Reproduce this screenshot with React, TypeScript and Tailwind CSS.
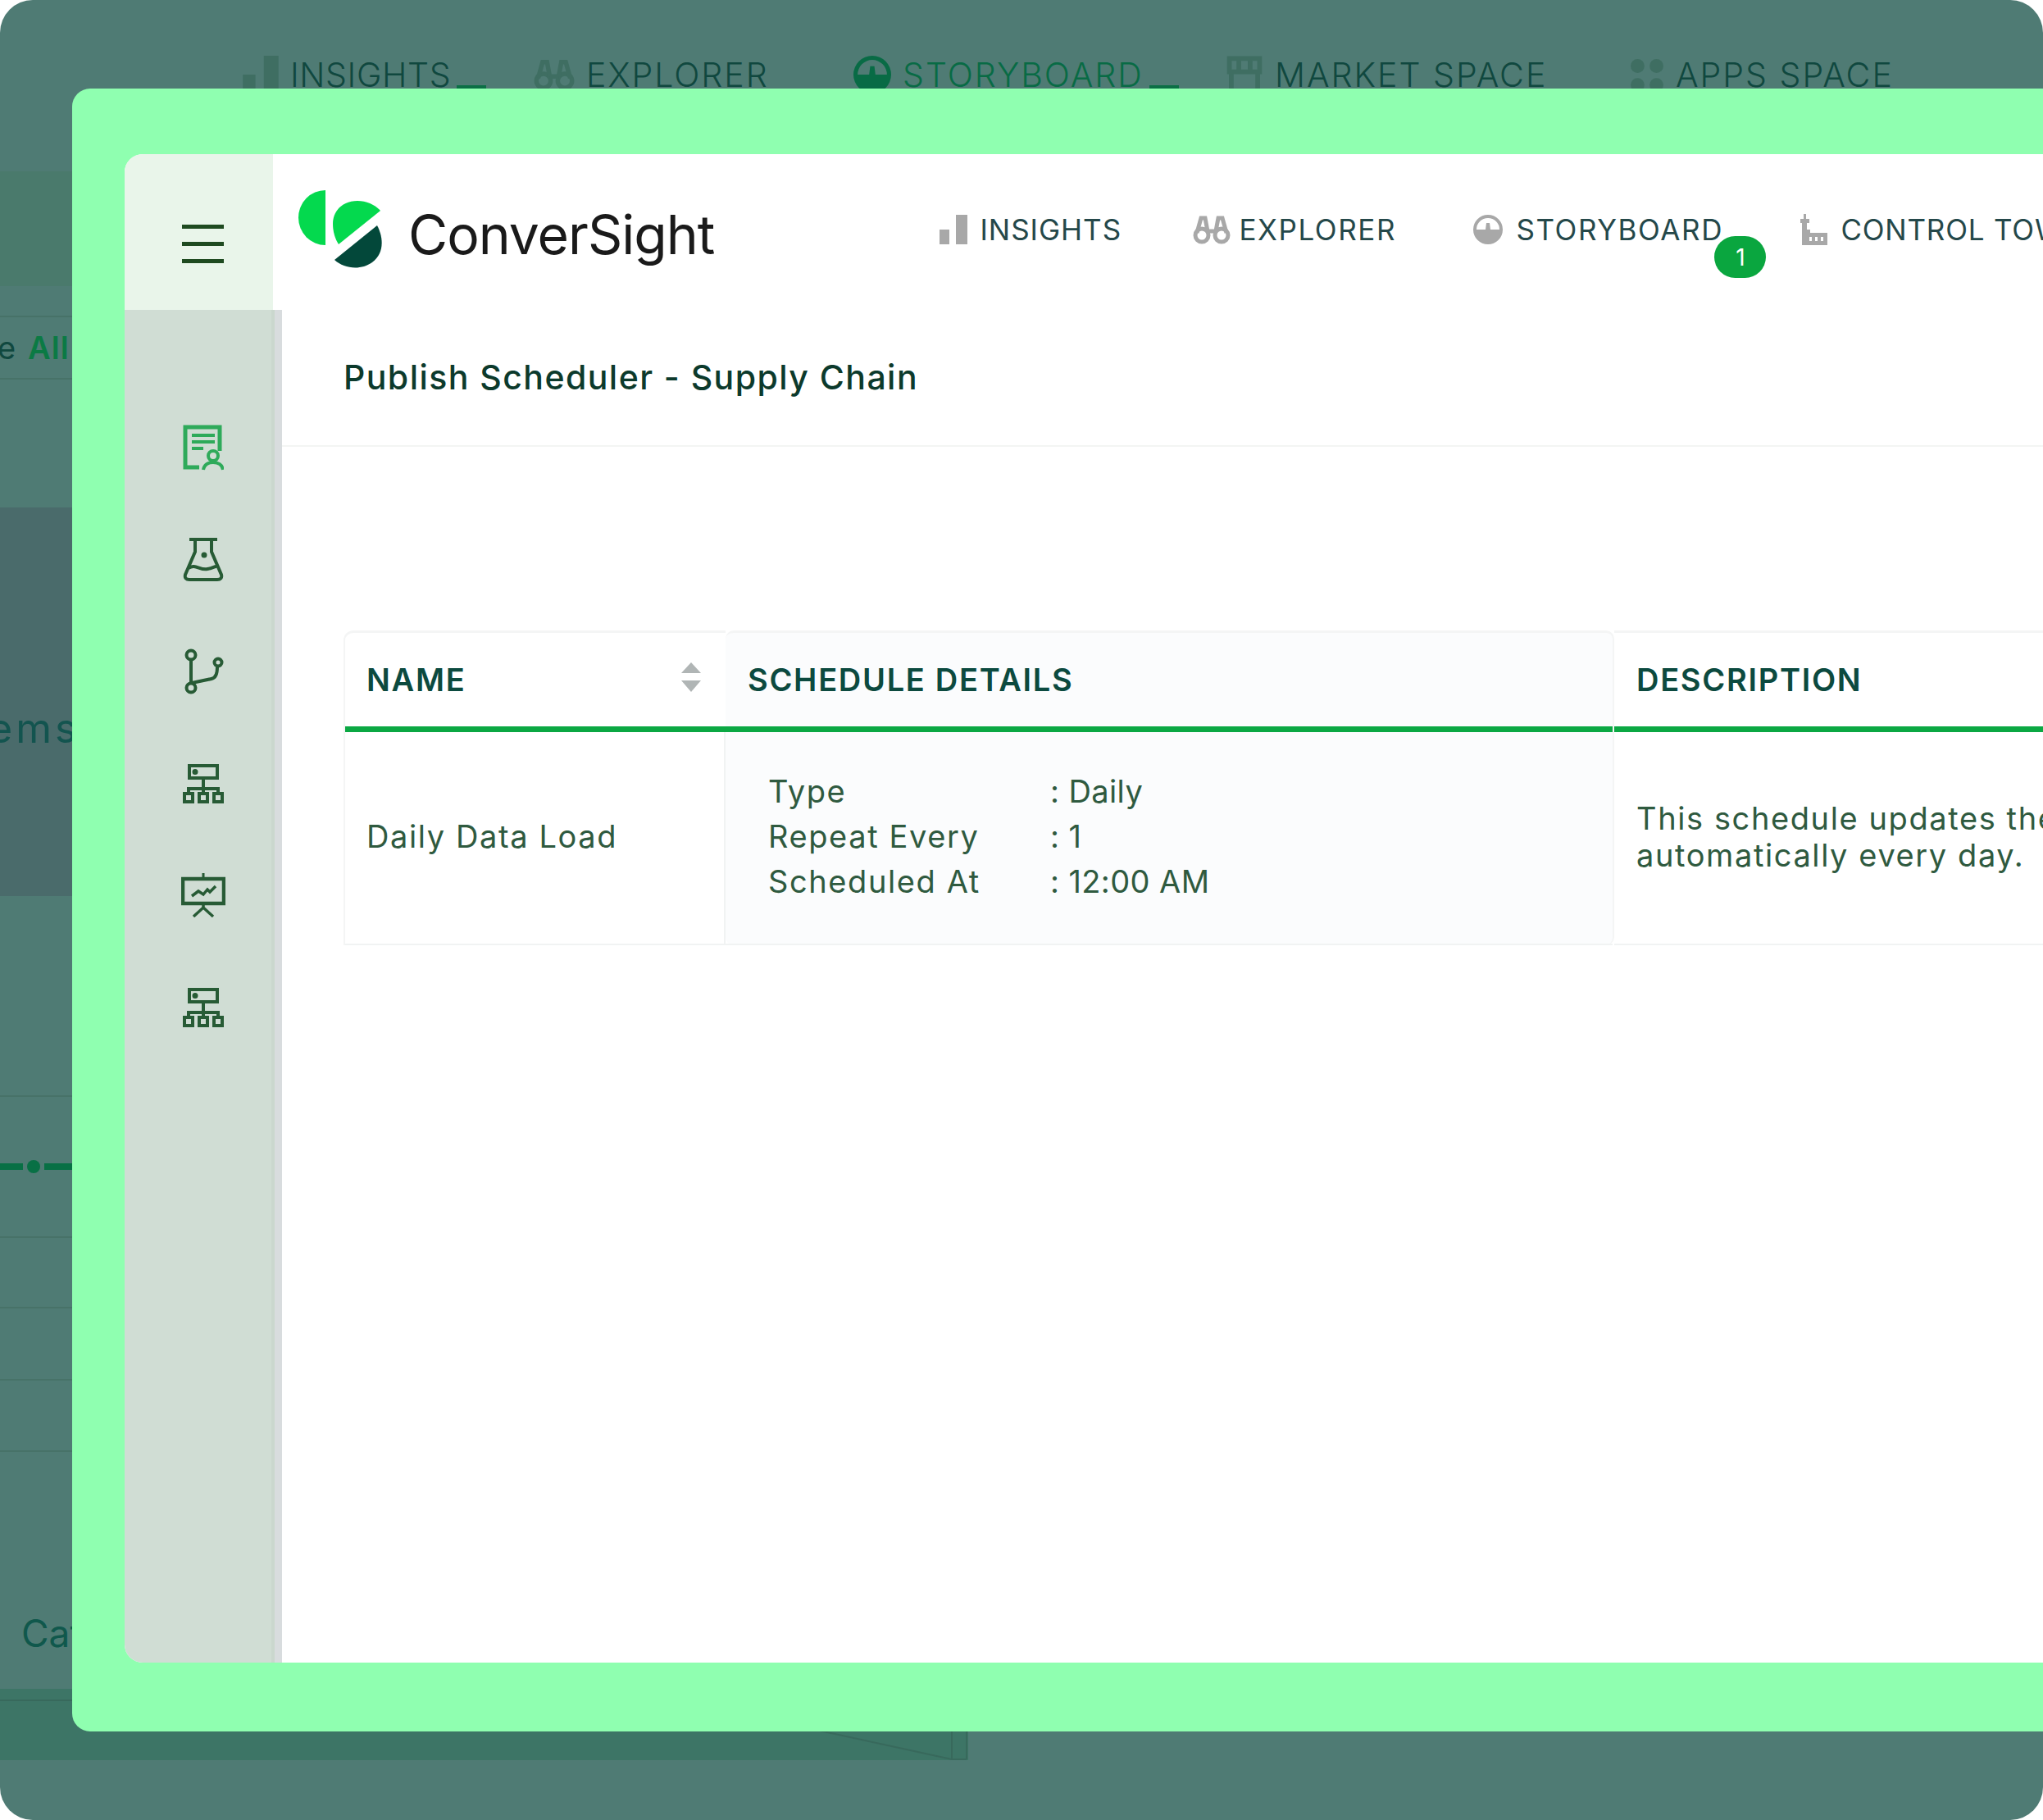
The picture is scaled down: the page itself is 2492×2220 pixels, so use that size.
import type { ReactNode } from 'react'

const BarsIcon = ({ className }: { className: string }) => (
  <svg viewBox="0 0 34 36" className={className} fill="currentColor">
    <rect x="0" y="18" width="12" height="18" />
    <rect x="20" y="0" width="14" height="36" />
  </svg>
)

const BinocularsIcon = ({ className }: { className: string }) => (
  <svg viewBox="0 0 46 36" className={className} fill="none" stroke="currentColor" strokeWidth="5">
    <circle cx="11" cy="25" r="8" />
    <circle cx="35" cy="25" r="8" />
    <path d="M5 22 10 4h5l3 16M41 22 36 4h-5l-3 16M18 20h10" />
  </svg>
)

const GaugeIcon = ({ className }: { className: string }) => (
  <svg viewBox="0 0 36 36" className={className} fill="currentColor">
    <path fillRule="evenodd" d="M18 0a18 18 0 1 1 0 36 18 18 0 0 1 0-36Zm0 4A14 14 0 0 0 4 18h11l1-8h4l1 8h11A14 14 0 0 0 18 4Z" />
  </svg>
)

const TowerIcon = ({ className }: { className: string }) => (
  <svg viewBox="0 0 34 38" className={className} fill="currentColor">
    <path fillRule="evenodd" d="M5 0h3v6h4v5H9v8h4v4h21v15H3V11H1V6h4V0Zm7 28v5h3v-5h-3Zm7 0v5h3v-5h-3Zm7 0v5h3v-5h-3Z" />
  </svg>
)

const StoreIcon = ({ className }: { className: string }) => (
  <svg viewBox="0 0 40 40" className={className} fill="none" stroke="currentColor" strokeWidth="5">
    <path d="M4 3h32v14H4zM14 3v14M26 3v14M6 17v20h28V17" />
  </svg>
)

const AppsIcon = ({ className }: { className: string }) => (
  <svg viewBox="0 0 40 40" className={className} fill="currentColor">
    <circle cx="9" cy="10" r="8" />
    <circle cx="31" cy="10" r="8" />
    <circle cx="9" cy="32" r="8" />
    <circle cx="31" cy="32" r="8" />
  </svg>
)

const ReportIcon = () => (
  <svg viewBox="0 0 50 56" className="h-[56px] w-[50px]" fill="none" stroke="#2eaa5a" strokeWidth="4">
    <path d="M20 52H3V3h42v29" strokeWidth="5" />
    <path d="M11 13h28M11 21h28M11 29h14" />
    <circle cx="37" cy="38" r="6" />
    <path d="M25 55c1-6 6-9 12-9s11 3 12 9" />
  </svg>
)

const FlaskIcon = () => (
  <svg viewBox="0 0 50 56" className="h-[56px] w-[50px]" fill="none" stroke="#275b35" strokeWidth="4">
    <path d="M8 3h34M15 3v15L3 46c-1 4 1 6 5 6h34c4 0 6-2 5-6L35 18V3" />
    <path d="M7 38c8-6 14 3 23 1 6-1 8-3 11-3" />
    <circle cx="26" cy="22" r="1.5" fill="#275b35" />
  </svg>
)

const BranchIcon = () => (
  <svg viewBox="0 0 50 56" className="h-[56px] w-[50px]" fill="none" stroke="#275b35" strokeWidth="4">
    <circle cx="10" cy="8" r="5.5" />
    <circle cx="10" cy="48" r="5.5" />
    <circle cx="43" cy="17" r="4.5" />
    <path d="M10 14v28M11 42l24-5c5-1 7-5 7-14" />
  </svg>
)

const NetworkIcon = () => (
  <svg viewBox="0 0 50 48" className="h-[48px] w-[50px]" fill="none" stroke="#275b35" strokeWidth="4">
    <rect x="8" y="2" width="34" height="15" />
    <circle cx="15" cy="9.5" r="1.5" fill="#275b35" />
    <path d="M25 17v13M7 36v-6h36v6M25 30v6" />
    <rect x="2" y="36" width="10" height="10" />
    <rect x="20" y="36" width="10" height="10" />
    <rect x="38" y="36" width="10" height="10" />
  </svg>
)

const PresentationIcon = () => (
  <svg viewBox="0 0 54 54" className="h-[54px] w-[54px]" fill="none" stroke="#275b35" strokeWidth="4.5">
    <path d="M27 0v6" strokeWidth="3" />
    <rect x="2" y="7" width="50" height="30" />
    <path d="m13 28 8-6 6 4 5-6 3 3 7-7" strokeWidth="3.5" />
    <path d="M27 38v4M15 53l12-11 12 11" strokeWidth="3.5" />
  </svg>
)

const BackNavItem = ({ icon, label, w, active, underline, tracking = 'tracking-[2px]' }: { icon: ReactNode; label: string; w: string; active?: boolean; underline?: boolean; tracking?: string }) => (
  <div className={`flex shrink-0 items-center gap-[14px] text-[41px] leading-none font-light ${tracking} ${w} ${active ? 'text-[#086b45]' : 'text-[#10483f]'}`}>
    <span className="shrink-0">{icon}</span>
    <span className="whitespace-nowrap">{label}</span>
    {underline && <span className="mb-[6px] -ml-[7px] h-[4px] w-[36px] shrink-0 self-end bg-[#0b6f45]" />}
  </div>
)

const NavItem = ({ icon, label, w, gap, tracking = 'tracking-[1.6px]' }: { icon: ReactNode; label: string; w: string; gap: string; tracking?: string }) => (
  <div className={`flex h-[36px] shrink-0 items-center text-[35px] leading-none text-[#25484a] ${tracking} ${w} ${gap}`}>
    {icon}
    <span className="whitespace-nowrap">{label}</span>
  </div>
)

const Detail = ({ label, value }: { label: string; value: string }) => (
  <div className="flex h-[55px] items-center">
    <span className="w-[344px]">{label}</span>
    <span className="tracking-[0.4px]">: {value}</span>
  </div>
)

export default function App() {
  return (
    <div className="relative h-[2220px] w-[2492px] overflow-hidden bg-white font-['Inter',sans-serif]">
      {/* page dimmed behind the modal */}
      <div className="h-full w-full overflow-hidden rounded-[40px] bg-[#4f7b74]">
        <div className="flex h-[209px] items-start pt-[68px] pl-[296px]">
          <BackNavItem w="w-[355px]" tracking="tracking-[0.6px]" label="INSIGHTS" underline icon={<BarsIcon className="h-[46px] w-[44px] text-[#3f6e62]" />} />
          <BackNavItem w="w-[390px]" label="EXPLORER" icon={<BinocularsIcon className="h-[46px] w-[50px] text-[#3f6e62]" />} />
          <BackNavItem w="w-[454px]" label="STORYBOARD" active underline icon={<GaugeIcon className="h-[46px] w-[46px] text-[#086b45]" />} />
          <BackNavItem w="w-[493px]" label="MARKET SPACE" icon={<StoreIcon className="h-[46px] w-[46px] text-[#3f6e62]" />} />
          <BackNavItem w="w-[340px]" label="APPS SPACE" icon={<AppsIcon className="h-[46px] w-[42px] text-[#3f6e62]" />} />
        </div>
        <div className="h-[140px] bg-[#4a7a6c]" />
        <div className="h-[36px]" />
        <div className="flex h-[78px] items-center overflow-hidden border-y-2 border-[#477268] text-[38px] whitespace-nowrap text-[#10483f]">
          <span className="-ml-[76px]">Store</span>
          <span className="ml-[15px] font-semibold tracking-[1px] text-[#0b7a44]">All</span>
        </div>
        <div className="h-[156px]" />
        <div className="flex h-[474px] items-center overflow-hidden bg-[#4a6b6b] pt-[64px] text-[50px] tracking-[4px] whitespace-nowrap text-[#13544f]">
          <span className="-ml-[52px]">Items</span>
        </div>
        <div className="h-[245px] border-b-2 border-[#477268]" />
        <div className="flex h-[93px] items-end">
          <div className="flex items-center">
            <div className="h-[8px] w-[28px] bg-[#087045]" />
            <div className="mx-[5px] h-[16px] w-[16px] rounded-full bg-[#087045]" />
            <div className="h-[8px] w-[400px] bg-[#087045]" />
          </div>
        </div>
        <div className="h-[79px] border-b-2 border-[#477268]" />
        <div className="h-[86px] border-b-2 border-[#477268]" />
        <div className="h-[88px] border-b-2 border-[#477268]" />
        <div className="h-[87px] border-b-2 border-[#477268]" />
        <div className="flex h-[289px] items-end pb-[45px] pl-[26px] text-[46px] leading-none text-[#10584c]">Category</div>
        <div className="relative h-[87px] w-[1181px] bg-[#3d7566]">
          <div className="h-[15px] border-b-2 border-[#38695c]" />
          <svg viewBox="0 0 200 40" className="absolute top-[47px] right-0 h-[40px] w-[200px]" fill="none" stroke="#38695c" strokeWidth="2">
            <path d="M0 0 180 39H198M180 39V0M198 39V0" />
          </svg>
        </div>
      </div>

      {/* modal */}
      <div className="absolute top-[108px] right-0 left-[88px] flex h-[2004px] rounded-l-[22px] bg-[#8fffb0] pt-[80px] pb-[84px] pl-[64px]">
        <div className="flex w-full overflow-hidden rounded-l-[22px] bg-white">
          <div className="flex w-[192px] shrink-0 flex-col">
            <div className="flex h-[190px] w-[181px] items-center bg-[#e9f5ea] pt-[28px] pl-[70px]">
              <div className="flex w-[51px] flex-col gap-[16px]">
                <div className="h-[5px] bg-[#1e4a20]" />
                <div className="h-[5px] bg-[#1e4a20]" />
                <div className="h-[5px] bg-[#1e4a20]" />
              </div>
            </div>
            <div className="flex flex-1 border-r-[9px] border-[#d8dcde]">
              <div className="flex flex-1 flex-col items-center gap-[80.6px] border-r-[4px] border-[#cad7ce] bg-[#d0ddd4] pt-[140px] pl-[13px]">
                {[<ReportIcon key="a" />, <FlaskIcon key="b" />, <BranchIcon key="c" />, <NetworkIcon key="d" />, <PresentationIcon key="e" />, <NetworkIcon key="f" />].map((icon, i) => (
                  <div key={i} className="flex h-[56px] items-center justify-center">{icon}</div>
                ))}
              </div>
            </div>
          </div>

          <div className="min-w-0 flex-1 overflow-hidden">
            <div className="flex h-[190px] pt-[44px] pl-[20px]">
              <div className="relative h-[100px] w-[105px] shrink-0">
                <svg viewBox="0 0 105 100" className="h-[100px] w-[105px]">
                  <path d="M33 0v67A33 33.500 0 0 1 33 0Z" fill="#04d94e" />
                  <path d="M42 41c0-16 12-28 30-28 11 0 22 5 28 12L49 66c-4-6-7-15-7-25Z" fill="#04d94e" />
                  <path d="M96 43c7 13 10 33-6 45-14 10-34 8-46-3Z" fill="#03483a" />
                </svg>
              </div>
              <span className="mt-[4px] ml-[29px] text-[66px] leading-[100px] tracking-[-1px] whitespace-nowrap text-[#1a1a1a]">ConverSight</span>
              <div className="relative ml-[275px] flex shrink-0 items-start pt-[30px]">
                <NavItem w="w-[309px]" gap="gap-[15px]" tracking="tracking-[1px]" label="INSIGHTS" icon={<BarsIcon className="h-[36px] w-[34px] text-[#a8a8a8]" />} />
                <NavItem w="w-[342px]" gap="gap-[10px]" label="EXPLORER" icon={<BinocularsIcon className="h-[36px] w-[46px] text-[#a8a8a8]" />} />
                <NavItem w="w-[398px]" gap="gap-[16px]" label="STORYBOARD" icon={<GaugeIcon className="h-[36px] w-[36px] text-[#a8a8a8]" />} />
                <NavItem w="w-[400px]" gap="gap-[16px]" tracking="tracking-[0.8px]" label="CONTROL TOWER" icon={<TowerIcon className="h-[38px] w-[34px] text-[#a8a8a8]" />} />
                <span className="absolute top-[56px] left-[945px] flex h-[51px] w-[63px] items-center justify-center rounded-full bg-[#0aa63f] text-[28px] leading-none text-white">1</span>
              </div>
            </div>

            <div className="flex h-[167px] items-center border-b-2 border-[#f3f5f3] pl-[75px] text-[41px] font-medium tracking-[1.45px] text-[#0c3a2c]">
              Publish Scheduler - Supply Chain
            </div>

            <div className="mt-[224px] ml-[75px] flex text-[#2f5a3f]">
              <div className="w-[466px] shrink-0 rounded-tl-[12px] border-t-[3px] border-l-2 border-[#f4f5f5]">
                <div className="flex h-[114px] items-center justify-between pr-[30px] pl-[26px] text-[38px] font-semibold tracking-[1.7px] text-[#0c4a3f]">
                  NAME
                  <svg viewBox="0 0 24 36" className="-mt-[6px] h-[36px] w-[24px]" fill="#b0b5b5">
                    <path d="M12 0 24 13H0ZM12 36 0 22h24Z" />
                  </svg>
                </div>
                <div className="h-[7px] bg-[#0ba843]" />
                <div className="flex h-[260px] items-center border-r-2 border-b-2 border-[#f1f3f3] pb-[3px] pl-[26px] text-[38px] tracking-[1.6px]">Daily Data Load</div>
              </div>
              <div className="w-[1084px] shrink-0 rounded-[10px] border-t-[3px] border-r-2 border-[#f4f5f5] bg-[#fbfcfd]">
                <div className="flex h-[114px] items-center pl-[27px] text-[38px] font-semibold tracking-[1.7px] text-[#0c4a3f]">SCHEDULE DETAILS</div>
                <div className="h-[7px] bg-[#0ba843]" />
                <div className="flex h-[260px] flex-col justify-center border-b-2 border-[#f1f3f3] pb-[3px] pl-[52px] text-[38px] tracking-[1.6px]">
                  <Detail label="Type" value="Daily" />
                  <Detail label="Repeat Every" value="1" />
                  <Detail label="Scheduled At" value="12:00 AM" />
                </div>
              </div>
              <div className="min-w-0 flex-1 border-t-[3px] border-[#f4f5f5]">
                <div className="flex h-[114px] items-center pl-[27px] text-[38px] font-semibold tracking-[1.7px] text-[#0c4a3f]">DESCRIPTION</div>
                <div className="h-[7px] w-[600px] bg-[#0ba843]" />
                <div className="flex h-[260px] w-[800px] items-center border-b-2 border-[#f1f3f3] pb-[3px] pl-[27px] text-[38px] leading-[45px] tracking-[1.6px]">
                  <p className="w-[760px]">This schedule updates the data automatically every day.</p>
                </div>
              </div>
            </div>
          </div>
        </div>
      </div>
    </div>
  )
}
